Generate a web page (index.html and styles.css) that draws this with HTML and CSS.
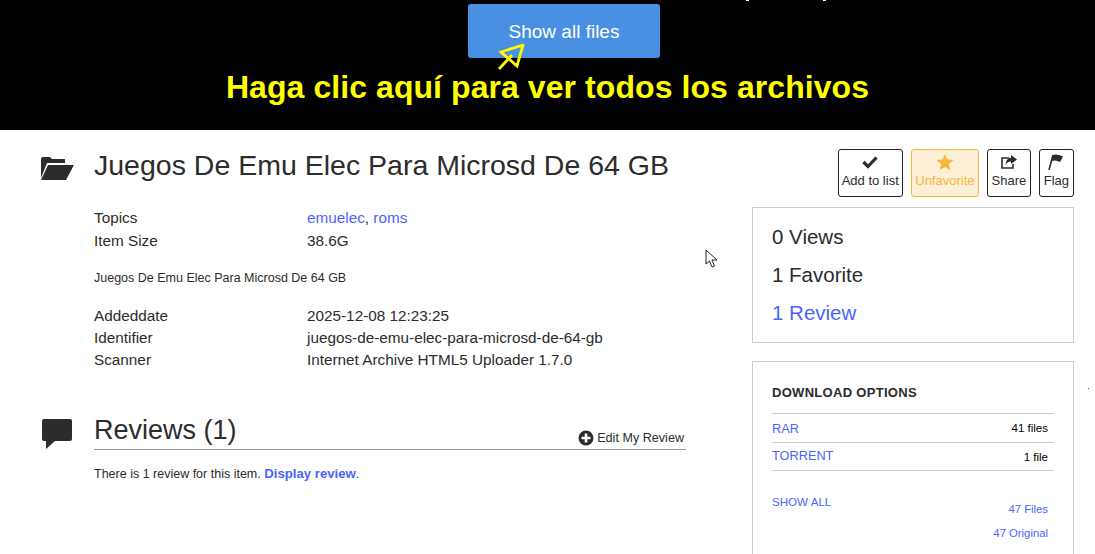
FILE: index.html
```html
<!DOCTYPE html>
<html lang="en">
<head>
  <meta charset="UTF-8" />
  <meta name="viewport" content="width=device-width, initial-scale=1.0"/>
  <title>Juegos De Emu Elec Para Microsd De 64 GB</title>
  <link rel="stylesheet" href="styles.css">
</head>
<body>

<div class="banner">
  <span class="speck speck-a"></span>
  <span class="speck speck-b"></span>
  <a class="show-files" href="#">Show all files</a>
  <div class="banner-note">Haga clic aquí para ver todos los archivos</div>
  <svg class="hand-arrow" width="30" height="28" viewBox="0 0 30 28">
    <path d="M25 1 L3 8 L19 22 Z M14 11 L1 25" fill="none" stroke="#ff0" stroke-width="2.8"/>
  </svg>
</div>

<div class="item">
  <div class="left">
    <div class="heading">
      <svg class="heading-icon" width="34" height="24" viewBox="0 0 34 24">
        <path d="M1 22 V3 Q1 1 3 1 H10 L12 3 H25 V7 H7 Z" fill="#2c2c2c"/>
        <path d="M8 9 H34 L26 24 H1 Z" fill="#2c2c2c"/>
      </svg>
      <h1>Juegos De Emu Elec Para Microsd De 64 GB</h1>
    </div>

    <div class="meta">
      <div class="meta-row topics"><span class="meta-key">Topics</span><span><a href="#">emuelec</a>, <a href="#">roms</a></span></div>
      <div class="meta-row"><span class="meta-key">Item Size</span><span>38.6G</span></div>
      <p class="description">Juegos De Emu Elec Para Microsd De 64 GB</p>
      <div class="meta-row"><span class="meta-key">Addeddate</span><span>2025-12-08 12:23:25</span></div>
      <div class="meta-row"><span class="meta-key">Identifier</span><span>juegos-de-emu-elec-para-microsd-de-64-gb</span></div>
      <div class="meta-row"><span class="meta-key">Scanner</span><span>Internet Archive HTML5 Uploader 1.7.0</span></div>
    </div>

    <div class="reviews">
      <svg class="reviews-icon" width="32" height="31" viewBox="0 0 32 31">
        <path d="M3 0 H29 Q31 0 31 2 V20 Q31 22 29 22 H14 L5 30 V22 H3 Q1 22 1 20 V2 Q1 0 3 0 Z" fill="#2c2c2c"/>
      </svg>
      <div class="reviews-body">
        <div class="reviews-head">
          <h2>Reviews (1)</h2>
          <a class="edit-review" href="#">
            <svg width="16" height="16" viewBox="0 0 16 16">
              <circle cx="8" cy="8" r="7.5" fill="#2c2c2c"/>
              <path d="M8 3.5 V12.5 M3.5 8 H12.5" stroke="#fff" stroke-width="2.6"/>
            </svg>
            Edit My Review
          </a>
        </div>
        <p class="reviews-text">There is 1 review for this item. <a href="#"><b>Display review</b></a>.</p>
      </div>
    </div>
  </div>

  <div class="right">
    <div class="actions">
      <a class="action" href="#">
        <svg width="16" height="16" viewBox="0 0 16 16"><path d="M1.5 8 L6 12.5 L14.5 3.5" fill="none" stroke="#2c2c2c" stroke-width="3.2"/></svg>
        Add to list
      </a>
      <a class="action fav" href="#">
        <svg width="18" height="16" viewBox="0 0 18 16"><path d="M9 0 L11.4 5.6 L17.5 6.1 L12.9 10.1 L14.3 16 L9 12.9 L3.7 16 L5.1 10.1 L.5 6.1 L6.6 5.6 Z" fill="#f5b83d"/></svg>
        Unfavorite
      </a>
      <a class="action wide" href="#">
        <svg width="16" height="16" viewBox="0 0 16 16"><path d="M8 4 H1 V14 H12 V10" fill="none" stroke="#2c2c2c" stroke-width="1.6"/><path d="M10 1 L16 5.5 L10 10 V7.5 Q6 7.5 4.5 11 Q5 4 10 3.8 Z" fill="#2c2c2c"/></svg>
        Share
      </a>
      <a class="action flag" href="#">
        <svg width="16" height="16" viewBox="0 0 16 16"><path d="M1 16 L5 1" stroke="#2c2c2c" stroke-width="1.6"/><path d="M5 1 Q9 -0.5 15 2.5 L12 8 Q8 5.5 3.5 7 Z" fill="#2c2c2c"/></svg>
        Flag
      </a>
    </div>

    <div class="box stats">
      <div>0 Views</div>
      <div>1 Favorite</div>
      <div><a href="#">1 Review</a></div>
    </div>

    <div class="box downloads">
      <h3>DOWNLOAD OPTIONS</h3>
      <div class="format"><a href="#">RAR</a><span>41 files</span></div>
      <div class="format"><a href="#">TORRENT</a><span>1 file</span></div>
      <div class="show-all">
        <a class="show-all-link" href="#">SHOW ALL</a>
        <div class="totals">
          <a href="#">47 Files</a>
          <a href="#">47 Original</a>
        </div>
      </div>
    </div>
  </div>
</div>

<svg class="cursor" width="14" height="20" viewBox="0 0 14 20">
  <path d="M1 1 V15 L4.5 12 L7 18 L9.5 17 L7 11 H12 Z" fill="#fff" stroke="#222" stroke-width="1"/>
</svg>
<span class="red-dot"></span>

</body>
</html>
```

FILE: styles.css
```css
html, body { height: 100%; }
body {
  margin: 0;
  height: 554px;
  overflow: hidden;
  position: relative;
  background: #fff;
  color: #2c2c2c;
  font-family: "Liberation Sans", Arial, sans-serif;
  font-size: 15.3px;
}
a { color: #4b64ff; text-decoration: none; }

.banner {
  position: relative;
  height: 130px;
  background: #000;
  display: flex;
  flex-direction: column;
  align-items: center;
}
.speck { position: absolute; top: 0; width: 3px; height: 1px; background: #fff; }
.speck-a { left: 746px; }
.speck-b { left: 823px; }
.show-files {
  margin: 4px 0 0 33px;
  width: 192px;
  height: 54px;
  line-height: 55px;
  text-align: center;
  background: #4a90e2;
  color: #fff;
  font-size: 19px;
  border-radius: 3px;
}
.banner-note {
  margin-top: 10px;
  color: #ff0;
  font-size: 32px;
  font-weight: bold;
  line-height: 38px;
  letter-spacing: .07px;
}
.hand-arrow { position: absolute; left: 498px; top: 44px; }

.item {
  display: flex;
  padding: 19px 21px 0 40px;
}
.left { width: 646px; margin-right: 66px; }
.right { width: 322px; }

.heading { display: flex; align-items: flex-start; height: 58px; }
.heading-icon { margin: 7px 20px 0 0; }
h1 {
  margin: 0;
  font-size: 28.5px;
  font-weight: normal;
  line-height: 32px;
}

.meta { margin-left: 54px; }
.meta-row { display: flex; line-height: 22px; height: 22px; }
.meta-row.topics { margin-bottom: 1px; }
.meta-key { width: 213px; }
.description { margin: 18px 0 19px; font-size: 12.5px; line-height: 16px; }

.reviews { display: flex; margin-top: 40px; }
.reviews-icon { margin: 8px 21px 0 1px; flex: none; }
.reviews-body { flex: 1; }
.reviews-head {
  display: flex;
  justify-content: space-between;
  align-items: flex-end;
  border-bottom: 1px solid #999;
  height: 38px;
}
h2 {
  margin: 0 0 2px;
  font-size: 27px;
  font-weight: normal;
  line-height: 34px;
}
.edit-review {
  display: flex;
  align-items: center;
  gap: 3px;
  margin: 0 2px 3px 0;
  color: #2c2c2c;
  font-size: 12.6px;
}
.reviews-text { margin: 15px 0 0; font-size: 12.5px; line-height: 18px; }
.reviews-text b { font-size: 13.2px; }

.actions {
  display: flex;
  justify-content: flex-end;
  gap: 8px;
  height: 58px;
}
.action {
  box-sizing: border-box;
  height: 48px;
  padding: 4px 3px 0;
  display: flex;
  flex-direction: column;
  align-items: center;
  gap: 3px;
  border: 1px solid #222;
  border-radius: 3px;
  color: #2c2c2c;
  font-size: 13px;
  line-height: 16px;
  white-space: nowrap;
}
.action svg { flex: none; }
.action.wide { padding: 4px 3.5px 0; }
.action.flag { padding: 4px 4px 0; }
.action.fav {
  background: #fdefd6;
  border-color: #f5b83d;
  color: #f5b83d;
  padding: 4px 3.5px 0;
}

.box {
  border: 1px solid #ccc;
  box-sizing: border-box;
  padding: 0 19px;
}
.stats {
  height: 136px;
  padding-top: 10px;
  font-size: 20.5px;
  line-height: 38px;
}
.downloads {
  margin-top: 18px;
  height: 193px;
  padding-top: 22px;
  border-bottom: none;
}
h3 {
  margin: 0 0 11px;
  font-size: 13px;
  font-weight: bold;
  line-height: 18px;
  letter-spacing: .3px;
}
.format {
  display: flex;
  justify-content: space-between;
  border-top: 1px solid #ccc;
  height: 28px;
  padding-right: 6px;
  font-size: 12.75px;
}
.format + .format { height: 27px; }
.format span { font-size: 11.5px; line-height: 29px; color: #000; }
.format a { line-height: 29px; }
.format + .format a { line-height: 25px; }
.show-all {
  display: flex;
  justify-content: space-between;
  border-top: 1px solid #ccc;
  padding: 24px 6px 0 0;
  font-size: 11.3px;
}
.totals {
  display: flex;
  flex-direction: column;
  align-items: flex-end;
  gap: 10px;
  padding-top: 7px;
  line-height: 14px;
}
.show-all-link { line-height: 14px; font-size: 11.6px; }

.cursor { position: absolute; left: 705px; top: 249px; }
.red-dot { position: absolute; left: 1088px; top: 388px; width: 1px; height: 1px; background: #e00; }
```
